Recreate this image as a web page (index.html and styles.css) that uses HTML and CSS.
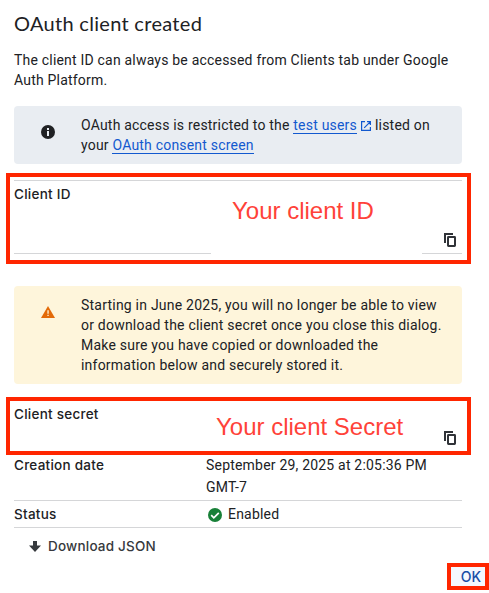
FILE: index.html
```html
<!DOCTYPE html>
<html lang="en">
<head>
<meta charset="utf-8">
<title>OAuth client created</title>
<link rel="stylesheet" href="styles.css">
</head>
<body>
<main class="dialog">
  <h1 class="title">OAuth client created</h1>
  <p class="intro">The client ID can always be accessed from Clients tab under Google<br>Auth Platform.</p>
  <section class="notice notice-info">
    <svg class="notice-icon" viewBox="0 0 14 14"><circle cx="7" cy="7" r="7" fill="#202124"/><path d="M6 3h2v2H6zM6 6h2v5H6z" fill="#e9edf2"/></svg>
    <p class="notice-text">OAuth access is restricted to the <a class="link">test users</a><svg class="external" viewBox="0 0 10 10"><path d="M4 .6H.6v8.8h8.8V6M6 .6h3.4V4M9.2.8 3.2 6.8" fill="none" stroke="#1259cf" stroke-width="1.2"/></svg>listed on<br>your <a class="link">OAuth consent screen</a></p>
  </section>
  <section class="field field-id">
    <span class="label">Client ID</span>
    <span class="value value-id">Your client ID</span>
    <svg class="copy" viewBox="0 0 12 14"><path d="M1 10V1H9" fill="none" stroke="#303338" stroke-width="2"/><rect x="4" y="4" width="7" height="9" rx=".4" fill="none" stroke="#303338" stroke-width="2"/></svg>
    <span class="rule rule-left"></span>
    <span class="rule rule-right"></span>
  </section>
  <section class="notice notice-warning">
    <svg class="notice-icon" viewBox="0 0 14 14"><path d="M7 1 14 13H0z" fill="#e36a08"/><path d="M6.4 5.3h1.3v3.5H6.4zM6.4 9.8h1.3v1.3H6.4z" fill="#fef5db"/></svg>
    <p class="notice-text">Starting in June 2025, you will no longer be able to view<br>or download the client secret once you close this dialog.<br>Make sure you have copied or downloaded the<br>information below and securely stored it.</p>
  </section>
  <section class="field field-secret">
    <span class="label label-secret">Client secret</span>
    <span class="value value-secret">Your client Secret</span>
    <svg class="copy" viewBox="0 0 12 14"><path d="M1 10V1H9" fill="none" stroke="#303338" stroke-width="2"/><rect x="4" y="4" width="7" height="9" rx=".4" fill="none" stroke="#303338" stroke-width="2"/></svg>
  </section>
  <dl class="details">
    <div class="row row-date"><dt class="label label-date">Creation date</dt><dd class="data">September 29, 2025 at 2:05:36 PM<br>GMT-7</dd></div>
    <div class="row row-status"><dt class="label label-status">Status</dt><dd class="data enabled"><svg class="check" viewBox="0 0 14 14"><circle cx="7" cy="7" r="7" fill="#188038"/><path d="m3.2 7.2 2.6 2.6 5-5" fill="none" stroke="#fff" stroke-width="1.7"/></svg>Enabled</dd></div>
  </dl>
  <div class="download"><svg class="arrow" viewBox="0 0 12 11"><path d="M4 0h4v4.5h4L6 11 0 4.5h4z" fill="#36393d"/></svg><span>Download JSON</span></div>
  <div class="actions"><button class="ok">OK</button></div>
</main>
</body>
</html>
```
FILE: styles.css
```css
* { box-sizing: border-box; }
body { margin: 0; background: #fff; color: #202124; font: 14px/20px Roboto, "Liberation Sans", sans-serif; letter-spacing: .2px; }
h1, p, dl, dd { margin: 0; }
.dialog { width: 489px; height: 593px; padding: 9px 27px 0 14px; overflow: hidden; white-space: nowrap; }
.title { height: 41px; font: 400 20px/28px Lato, sans-serif; letter-spacing: .3px; }
.intro { height: 56px; }
.notice { display: flex; align-items: flex-start; padding: 10px 0 0 27px; border-radius: 4px; }
.notice-info { height: 58px; background: #e9edf2; }
.notice-warning { height: 98px; margin-top: 22px; background: #fef5db; }
.notice-icon { flex: none; width: 14px; height: 14px; margin: 9px 26px 0 0; }
.notice-text { margin-top: -1px; }
.notice-warning .notice-text { letter-spacing: .22px; }
.link { color: #1259cf; border-bottom: 1px solid #1259cf; }
.external { width: 10px; height: 10px; margin: 0 4px 0 4px; vertical-align: -1px; }
.field { display: grid; width: 465px; margin-left: -8px; border: 4px solid #ff2600; padding-left: 4px; }
.field-id { height: 91px; margin-top: 9px; grid-template: 3px 15px 34px 23px 1fr / 197px 207px 44px; }
.field-id::before { content: ""; grid-area: 1 / 1 / 2 / 4; height: 1px; align-self: end; background: #d5d6d8; transform: translateY(1px); }
.label { font: 500 13.5px/20px Inter, sans-serif; letter-spacing: .25px; }
.field-id .label { grid-area: 2 / 1; margin-top: 4px; }
.value { color: #ff4239; font: 24px/28px "Liberation Sans", Arial, sans-serif; letter-spacing: 0; }
.value-id { grid-area: 2 / 1 / 4 / 4; margin: 17px 0 0 218px; }
.copy { width: 12px; height: 14px; }
.field-id .copy { grid-area: 4 / 3; margin: 4px 0 0 26px; }
.rule { height: 1px; background: #d5d6d8; }
.rule-left { grid-area: 5 / 1; margin-top: 1px; }
.rule-right { grid-area: 5 / 3; margin: 1px 0 0 4px; }
.field-secret { height: 58px; margin-top: 13px; grid-template: 1fr / 202px 220px 1fr; }
.label-secret { margin-top: 3px; }
.value-secret { margin-top: 12px; }
.field-secret .copy { margin: 30px 0 0 8px; }
.row { display: grid; grid-template-columns: 192px 1fr; border-bottom: 1px solid #d5d6d8; }
.row-date { height: 46px; }
.row-date .data { line-height: 22px; margin-top: -1px; }
.row-status { height: 27px; align-items: center; }
.enabled { display: flex; align-items: center; }
.check { width: 14px; height: 14px; margin: 1px 6px 0 2px; }
.download { display: flex; align-items: center; height: 36px; padding-left: 15px; color: #36393d; font: 500 13.5px/20px Inter, sans-serif; letter-spacing: .2px; }
.arrow { width: 12px; height: 11px; margin-right: 7px; }
.actions { display: flex; justify-content: flex-end; margin: -1px -27px 0 0; }
.ok { width: 42px; height: 27px; margin: 0; padding: 0 0 0 6px; border: 4px solid #ff2600; background: #f4f8fe; color: #174ea6; font: 500 14px/20px Inter, sans-serif; }
```
